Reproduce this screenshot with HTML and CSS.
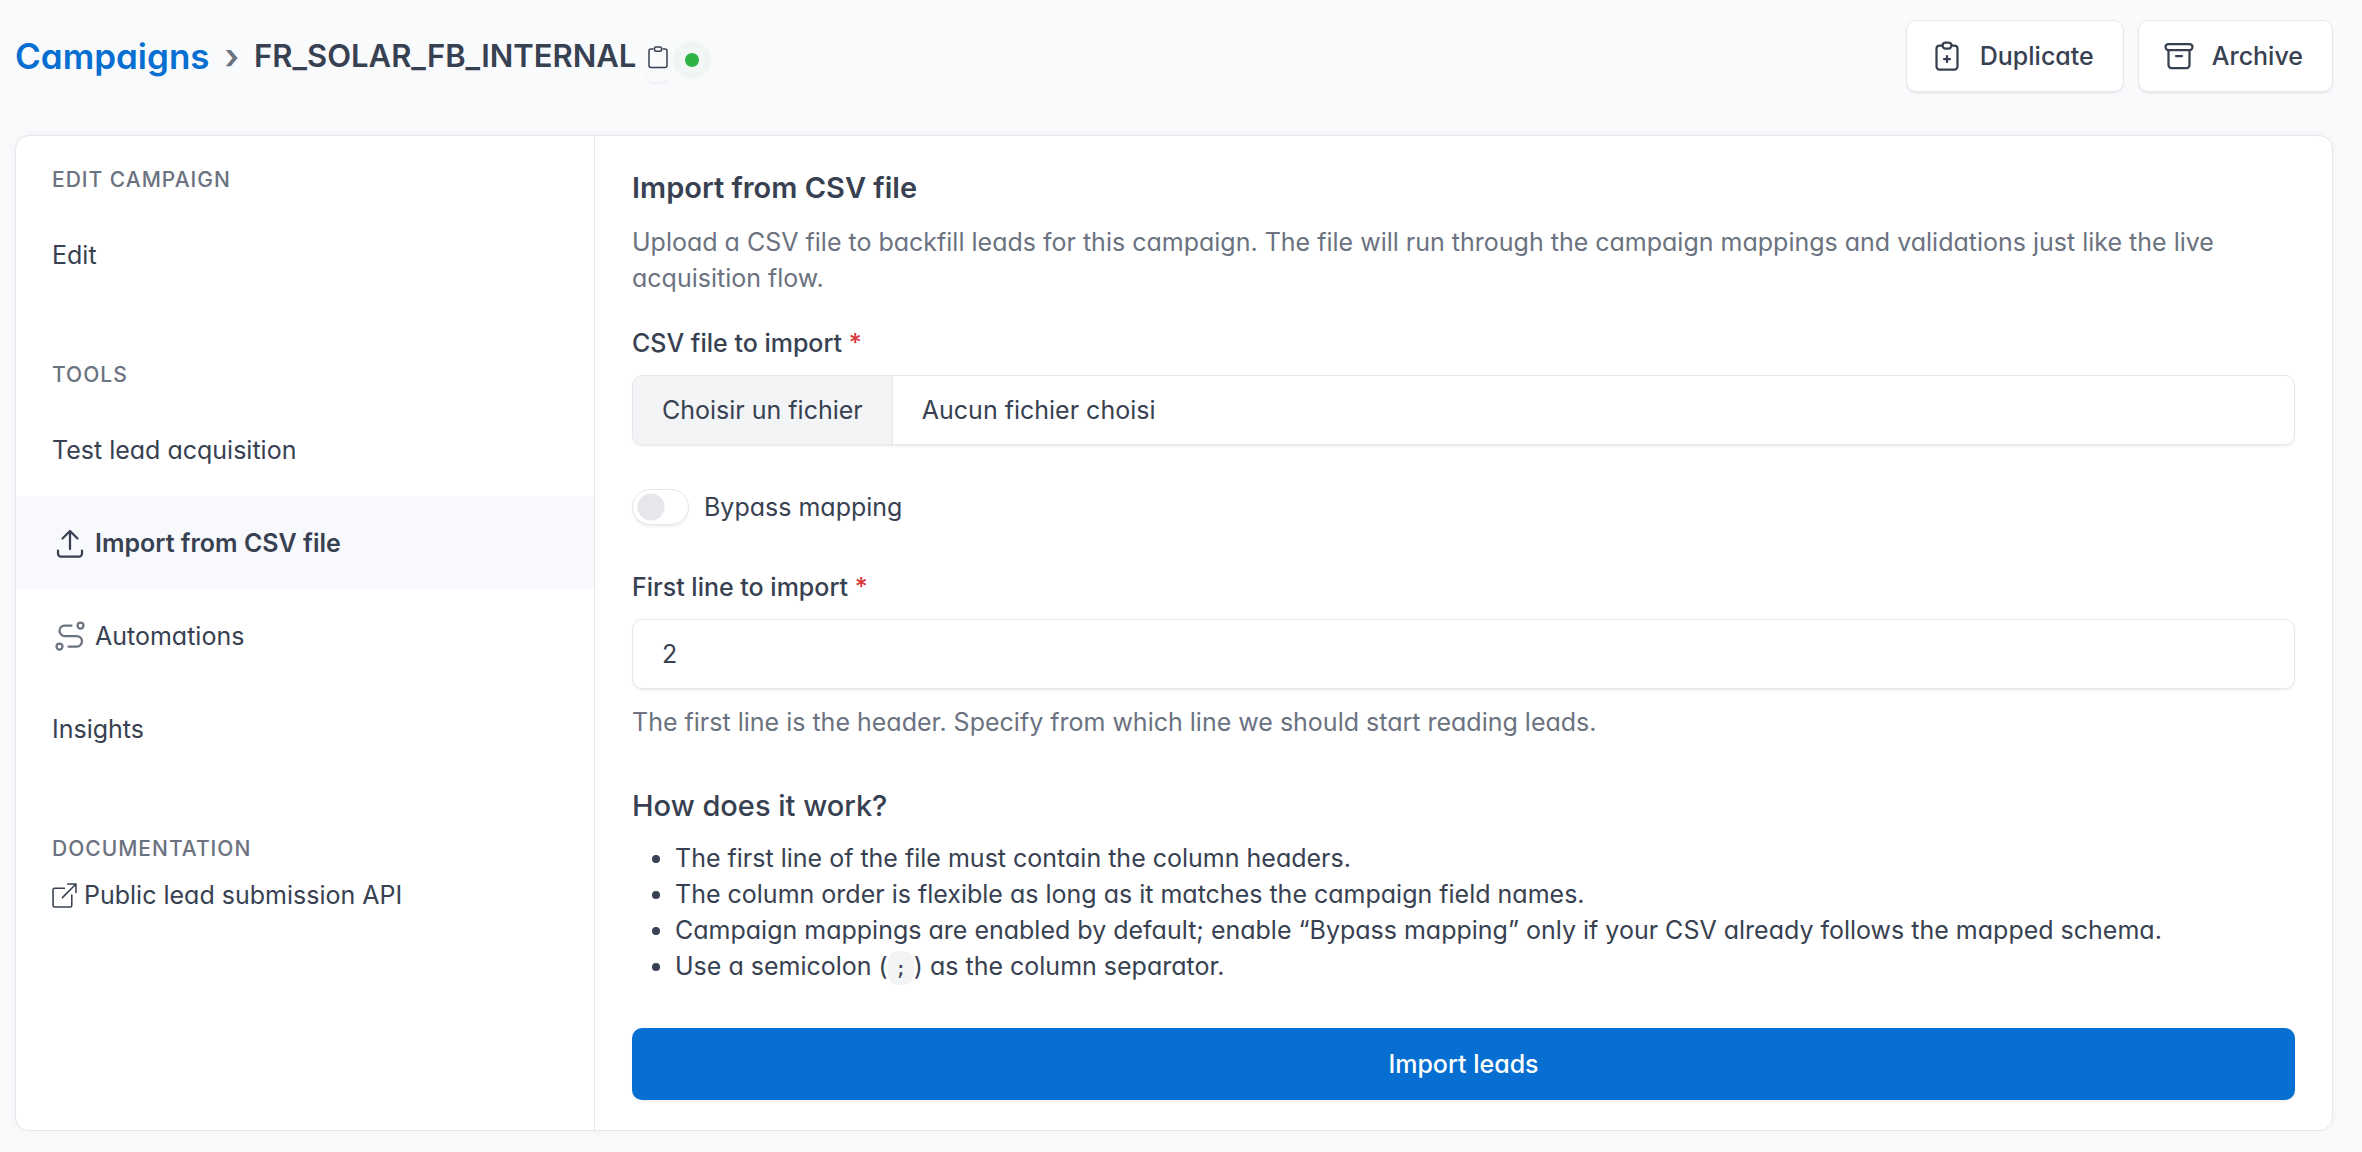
FILE: index.html
```
<!DOCTYPE html>
<html lang="en">
<head>
    <meta charset="UTF-8">
    <meta name="viewport" content="width=device-width, initial-scale=1.0">
    <title>Import from CSV file - FR_SOLAR_FB_INTERNAL</title>
    <link rel="stylesheet" href="styles.css">
</head>
<body>
    <header class="page-header">
        <div class="breadcrumb">
            <a class="breadcrumb-link" href="#">Campaigns</a>
            <span class="breadcrumb-separator">›</span>
            <h1 class="page-title">FR_SOLAR_FB_INTERNAL</h1>
            <div class="title-extras">
                <button class="copy-button" type="button" aria-label="Copy name">
                    <svg class="icon-copy" viewBox="0 0 24 24"><path d="M7 4h-2a2 2 0 0 0 -2 2v14.500a2 2 0 0 0 2 2h14a2 2 0 0 0 2 -2v-14.500a2 2 0 0 0 -2 -2h-2"/><rect x="8.500" y="2" width="7" height="4.200" rx="1.500"/></svg>
                </button>
                <span class="status"><span class="status-dot"></span></span>
            </div>
        </div>
        <div class="header-actions">
            <button class="btn" type="button">
                <svg class="icon" viewBox="0 0 24 24"><path d="M9 5h-2a2 2 0 0 0 -2 2v12a2 2 0 0 0 2 2h10a2 2 0 0 0 2 -2v-12a2 2 0 0 0 -2 -2h-2"/><rect x="9" y="3" width="6" height="4" rx="2"/><path d="M10 14h4M12 12v4"/></svg>
                Duplicate
            </button>
            <button class="btn" type="button">
                <svg class="icon" viewBox="0 0 24 24"><rect x="3" y="4" width="18" height="4" rx="2"/><path d="M5 8v10a2 2 0 0 0 2 2h10a2 2 0 0 0 2 -2v-10M10 12h4"/></svg>
                Archive
            </button>
        </div>
    </header>

    <div class="card">
        <nav class="sidebar">
            <h4 class="subheader">Edit campaign</h4>
            <a class="nav-item" href="#">Edit</a>

            <h4 class="subheader">Tools</h4>
            <a class="nav-item" href="#">Test lead acquisition</a>
            <a class="nav-item active" href="#">
                <svg class="icon" viewBox="0 0 24 24"><path d="M4 17v2a2 2 0 0 0 2 2h12a2 2 0 0 0 2 -2v-2M7 9l5 -5l5 5M12 4v12"/></svg>
                Import from CSV file
            </a>
            <a class="nav-item" href="#">
                <svg class="icon icon-muted" viewBox="0 0 24 24"><circle cx="5" cy="19" r="2"/><circle cx="19" cy="5" r="2"/><path d="M11 19h5.500a3.500 3.500 0 0 0 0 -7h-8a3.500 3.500 0 0 1 0 -7h4.500"/></svg>
                Automations
            </a>
            <a class="nav-item" href="#">Insights</a>

            <h4 class="subheader">Documentation</h4>
            <a class="doc-link" href="#">
                <svg class="icon-external" viewBox="0 0 24 24"><path d="M12 5h-9.500a1.500 1.500 0 0 0 -1.500 1.500v15a1.500 1.500 0 0 0 1.500 1.500h15a1.500 1.500 0 0 0 1.500 -1.500v-10M10 14l13 -13M15 1h8v8"/></svg>
                Public lead submission API
            </a>
        </nav>

        <main class="content">
            <h3 class="section-title">Import from CSV file</h3>
            <p class="description">Upload a CSV file to backfill leads for this campaign. The file will run through the campaign mappings and validations just like the live acquisition flow.</p>

            <form class="import-form">
                <div class="field">
                    <label class="form-label" for="csvFile">CSV file to import <span class="required">*</span></label>
                    <div class="file-control">
                        <span class="file-button">Choisir un fichier</span>
                        <span class="file-name">Aucun fichier choisi</span>
                        <input class="file-input" type="file" id="csvFile" accept=".csv">
                    </div>
                </div>

                <label class="switch">
                    <input class="switch-input" type="checkbox">
                    Bypass mapping
                </label>

                <div class="field">
                    <label class="form-label" for="firstLine">First line to import <span class="required">*</span></label>
                    <input class="form-control" type="text" inputmode="numeric" id="firstLine" value="2">
                    <p class="hint">The first line is the header. Specify from which line we should start reading leads.</p>
                </div>

                <div class="help">
                    <h3 class="help-title">How does it work?</h3>
                    <ul class="help-list">
                        <li>The first line of the file must contain the column headers.</li>
                        <li>The column order is flexible as long as it matches the campaign field names.</li>
                        <li>Campaign mappings are enabled by default; enable “Bypass mapping” only if your CSV already follows the mapped schema.</li>
                        <li>Use a semicolon (<code>;</code>) as the column separator.</li>
                    </ul>
                </div>

                <button class="btn-primary" type="submit">Import leads</button>
            </form>
        </main>
    </div>
</body>
</html>
```

FILE: styles.css
```
* {
    box-sizing: border-box;
}
body {
    margin: 0;
    padding: 20px 29px 22px 15px;
    background-color: #f9fafc;
    color: #374151;
    font-family: Inter, "Liberation Sans", sans-serif;
    font-size: 25px;
    line-height: 36px;
    font-feature-settings: "cv03", "cv04", "cv11";
}
h1,
h3,
h4,
p,
ul {
    margin: 0;
}
a {
    color: inherit;
    text-decoration: none;
}
button,
input {
    font: inherit;
    font-feature-settings: inherit;
    color: inherit;
}
svg {
    flex: none;
    fill: none;
    stroke: currentColor;
    stroke-width: 1.5;
    stroke-linecap: round;
    stroke-linejoin: round;
}
.icon {
    width: 36px;
    height: 36px;
}
.icon-muted {
    color: #6b7280;
}

/* Header */
.page-header {
    display: flex;
    justify-content: space-between;
    align-items: center;
    margin-bottom: 43px;
}
.breadcrumb {
    display: flex;
    align-items: center;
}
.breadcrumb-link {
    color: #066fd1;
    font-size: 35px;
    font-weight: 600;
}
.breadcrumb-separator {
    margin: 0 15px;
    color: #6b7280;
    font-size: 35px;
    font-weight: 600;
}
.page-title {
    font-size: 31px;
    font-weight: 600;
    line-height: 38px;
}
.title-extras {
    display: flex;
    align-items: center;
    gap: 3px;
    margin-left: 10px;
    padding-top: 8px;
}
.copy-button {
    display: flex;
    padding: 7px 0 13px;
    border: 0;
    border-radius: 8px;
    background: none;
    box-shadow: 0 2px 2px rgba(31, 41, 55, 0.05);
    cursor: pointer;
}
.icon-copy {
    width: 24px;
    height: 24px;
}
.status {
    display: flex;
    padding: 12px;
    border-radius: 20px;
    background-color: #f1f6f4;
}
.status-dot {
    width: 14px;
    height: 14px;
    border-radius: 50%;
    background-color: #2fb344;
}
.header-actions {
    display: flex;
    gap: 14px;
}
.btn {
    display: flex;
    align-items: center;
    gap: 15px;
    padding: 17px 29px 17px 22px;
    border: 1px solid #e5e7eb;
    border-radius: 10px;
    background-color: #fff;
    box-shadow: 0 2px 2px rgba(31, 41, 55, 0.06);
    font-weight: 500;
    cursor: pointer;
}

/* Card */
.card {
    display: flex;
    border: 1px solid #e5e7eb;
    border-radius: 14px;
    background-color: #fff;
    box-shadow: 0 0 8px rgba(31, 41, 55, 0.04);
}
.sidebar {
    flex: 0 0 25%;
    padding-top: 29px;
    border-right: 1px solid #e5e7eb;
}
.subheader {
    padding: 0 36px 13px;
    color: #6b7280;
    font-size: 21px;
    font-weight: 500;
    line-height: 30px;
    letter-spacing: 1px;
    text-transform: uppercase;
}
.nav-item + .subheader {
    margin-top: 59px;
}
.nav-item {
    display: flex;
    align-items: center;
    gap: 7px;
    padding: 29px 36px 28px;
}
.nav-item.active {
    background-color: #f8f9fd;
    font-weight: 600;
}
.doc-link {
    display: flex;
    align-items: center;
    gap: 7px;
    padding: 0 36px;
}
.icon-external {
    width: 25px;
    height: 25px;
}

/* Import form */
.content {
    flex: 1;
    padding: 30px 37px;
}
.section-title {
    margin-bottom: 15px;
    font-size: 29px;
    font-weight: 600;
    line-height: 43px;
}
.description {
    margin-bottom: 29px;
    color: #6b7280;
}
.import-form {
    display: flex;
    flex-direction: column;
    gap: 44px;
}
.form-label {
    display: block;
    margin-bottom: 14px;
    font-weight: 500;
}
.required {
    color: #d63939;
}
.file-control,
.form-control {
    width: 100%;
    border: 1px solid #e5e7eb;
    border-radius: 10px;
    background-color: #fff;
    box-shadow: 0 2px 2px rgba(31, 41, 55, 0.06);
}
.file-control {
    display: flex;
    position: relative;
    overflow: hidden;
}
.file-button {
    padding: 16px 29px;
    border-right: 1px solid #e5e7eb;
    background-color: #f3f4f6;
}
.file-name {
    padding: 16px 29px;
}
.file-input {
    position: absolute;
    inset: 0;
    opacity: 0;
    cursor: pointer;
}
.form-control {
    display: block;
    padding: 16px 29px;
}
.hint {
    margin-top: 15px;
    color: #6b7280;
}
.switch {
    display: flex;
    align-items: center;
    gap: 15px;
}
.switch-input {
    appearance: none;
    width: 57px;
    height: 36px;
    margin: 0;
    border: 1px solid #e5e7eb;
    border-radius: 18px;
    background: #fff radial-gradient(circle at 18px 17px, #e5e7eb 13px, transparent 14px);
    box-shadow: 0 2px 2px rgba(31, 41, 55, 0.06);
}
.switch-input:checked {
    background: #066fd1 radial-gradient(circle at 37px 17px, #fff 13px, transparent 14px);
}
.help-title {
    margin-bottom: 13px;
    font-size: 29px;
    font-weight: 500;
    line-height: 43px;
}
.help-list {
    padding-left: 43px;
}
.help-list code {
    padding: 5px 7px;
    border-radius: 10px;
    background-color: #f3f4f6;
    font-family: "DejaVu Sans Mono", monospace;
    font-size: 20px;
    line-height: 25px;
}
.btn-primary {
    padding: 18px 29px;
    border: 0;
    border-radius: 10px;
    background-color: #066fd1;
    box-shadow: 0 2px 2px rgba(31, 41, 55, 0.06);
    color: #fff;
    font-weight: 500;
    cursor: pointer;
}
```
